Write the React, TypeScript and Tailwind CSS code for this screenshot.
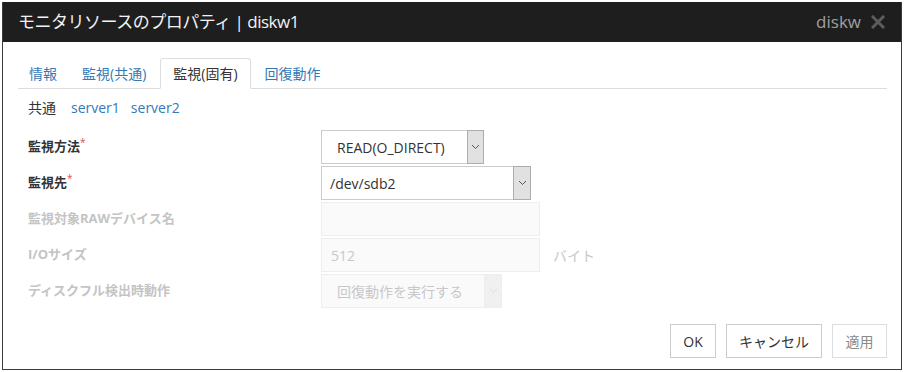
import React from "react";

const Chevron = ({ color = "#555" }: { color?: string }) => (
  <svg width="9" height="6" viewBox="0 0 9 6">
    <polyline points="1,1 4.5,4.5 8,1" fill="none" stroke={color} strokeWidth="1" />
  </svg>
);

export default function App() {
  const font = { fontFamily: '"Open Sans", "Noto Sans CJK JP", sans-serif' };
  return (
    <div className="w-[904px] h-[372px] bg-white pt-[2px] pl-[2px] pr-[2px] pb-[2px]" style={font}>
      <div className="w-full h-full border-l border-r border-b border-[#3c3c3c] flex flex-col bg-white">
        {/* Header */}
        <div className="h-[40px] bg-[#1e1e1e] flex items-center justify-between pl-[15px] pr-[16px] shrink-0">
          <div className="text-[17px] text-[#f2f2f2] tracking-[-0.5px]">モニタリソースのプロパティ | diskw1</div>
          <div className="flex items-center gap-[10px]">
            <span className="text-[17px] text-[#a0a0a0]">diskw</span>
            <svg width="14" height="14" viewBox="0 0 14 14">
              <path d="M2 2 L12 12 M12 2 L2 12" stroke="#5c5c5c" strokeWidth="3" strokeLinecap="square" />
            </svg>
          </div>
        </div>
        {/* Body */}
        <div className="flex flex-col pl-[15px] pr-[14px] pt-[16px] flex-1">
          {/* Tabs */}
          <div className="flex h-[31px] border-b border-[#dddddd] text-[14px]">
            <div className="px-[11px] mr-[2px] h-[31px] flex items-center text-[#337ab7]">情報</div>
            <div className="px-[12px] mr-[2px] h-[31px] flex items-center text-[#337ab7]">監視(共通)</div>
            <div className="px-[12px] mr-[2px] h-[31px] flex items-center text-[#333] bg-white border border-[#dddddd] border-b-white rounded-t-[3px] mb-[-1px]">監視(固有)</div>
            <div className="px-[12px] mr-[2px] h-[31px] flex items-center text-[#337ab7]">回復動作</div>
          </div>
          {/* Sub nav */}
          <div className="flex items-center h-[38px] pl-[10px] text-[14px] pb-[2px]">
            <span className="text-[#333]">共通</span>
            <span className="text-[#337ab7] ml-[15px]">server1</span>
            <span className="text-[#337ab7] ml-[11px]">server2</span>
          </div>
          {/* Form */}
          <div className="flex flex-col gap-[2px] mt-[3px]">
            <div className="flex items-center h-[34px]">
              <div className="w-[303px] pl-[10px] text-[13px] font-bold text-[#333]">
                監視方法<sup className="text-[#d9534f] font-normal text-[10px]">*</sup>
              </div>
              <div className="flex h-[34px] w-[163px] border border-[#cccccc] bg-white">
                <div className="flex-1 flex items-center pl-[15px] text-[14px] text-[#333]">READ(O_DIRECT)</div>
                <div className="w-[17px] h-[34px] -mt-[1px] -mr-[1px] bg-[#e1e1e1] border border-[#adadad] flex items-center justify-center">
                  <Chevron />
                </div>
              </div>
            </div>
            <div className="flex items-center h-[34px]">
              <div className="w-[303px] pl-[10px] text-[13px] font-bold text-[#333]">
                監視先<sup className="text-[#d9534f] font-normal text-[10px]">*</sup>
              </div>
              <div className="flex h-[34px] w-[210px] border border-[#cccccc] bg-white">
                <div className="flex-1 flex items-center pl-[8px] text-[14px] text-[#333]">/dev/sdb2</div>
                <div className="w-[18px] h-[34px] -mt-[1px] -mr-[1px] bg-[#e1e1e1] border border-[#adadad] flex items-center justify-center">
                  <Chevron />
                </div>
              </div>
            </div>
            <div className="flex items-center h-[34px]">
              <div className="w-[303px] pl-[10px] text-[13px] font-bold text-[#c4c4c4]">監視対象RAWデバイス名</div>
              <div className="h-[34px] w-[219px] border border-[#eeeeee] bg-[#fafafa]"></div>
            </div>
            <div className="flex items-center h-[34px]">
              <div className="w-[303px] pl-[10px] text-[13px] font-bold text-[#c4c4c4]">I/Oサイズ</div>
              <div className="h-[34px] w-[219px] border border-[#eeeeee] bg-[#fafafa] flex items-center pl-[9px] text-[14px] text-[#c8c8c8]">512</div>
              <div className="ml-[13px] text-[14px] text-[#c8c8c8]">バイト</div>
            </div>
            <div className="flex items-center h-[34px]">
              <div className="w-[303px] pl-[10px] text-[13px] font-bold text-[#c4c4c4]">ディスクフル検出時動作</div>
              <div className="flex h-[34px] w-[181px] border border-[#eeeeee] bg-[#fafafa]">
                <div className="flex-1 flex items-center pl-[15px] text-[14px] text-[#c8c8c8]">回復動作を実行する</div>
                <div className="w-[18px] h-[34px] -mt-[1px] -mr-[1px] bg-[#f0f0f0] border border-[#eeeeee] flex items-center justify-center">
                  <Chevron color="#dddddd" />
                </div>
              </div>
            </div>
          </div>
          {/* Buttons */}
          <div className="flex justify-end gap-[10px] mt-[16px]">
            <button className="h-[34px] w-[46px] border border-[#cccccc] bg-white text-[14px] text-[#333]">OK</button>
            <button className="h-[34px] w-[96px] border border-[#cccccc] bg-white text-[14px] text-[#333]">キャンセル</button>
            <button className="h-[34px] w-[55px] border border-[#dddddd] bg-white text-[14px] text-[#8a8a8a]">適用</button>
          </div>
        </div>
      </div>
    </div>
  );
}
